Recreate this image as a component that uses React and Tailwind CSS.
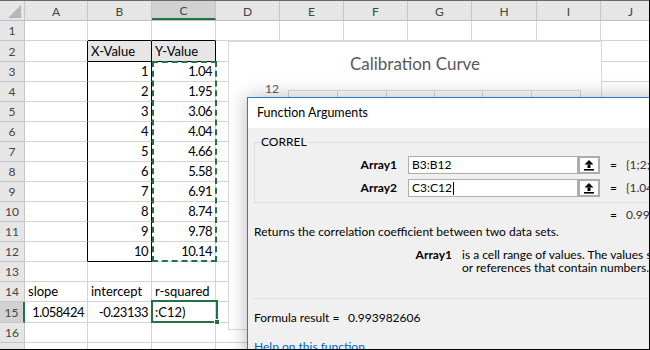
import React from 'react';

const COLS = [
  { l: 'A', w: 'w-[63px]' },
  { l: 'B', w: 'w-[64px]' },
  { l: 'C', w: 'w-[64px]' },
  { l: 'D', w: 'w-[64px]' },
  { l: 'E', w: 'w-[64px]' },
  { l: 'F', w: 'w-[64px]' },
  { l: 'G', w: 'w-[64px]' },
  { l: 'H', w: 'w-[65px]' },
  { l: 'I', w: 'w-[64px]' },
  { l: 'J', w: 'w-[60px]' },
];

const YVALS = ['1.04', '1.95', '3.06', '4.04', '4.66', '5.58', '6.91', '8.74', '9.78', '10.14'];

const DATA = {
  '2-1': 'X-Value',
  '2-2': 'Y-Value',
  '14-0': 'slope',
  '14-1': 'intercept',
  '14-2': 'r-squared',
  '15-0': '1.058424',
  '15-1': '-0.23133',
  '15-2': ':C12)',
};
for (let r = 3; r <= 12; r++) {
  DATA[`${r}-1`] = String(r - 2);
  DATA[`${r}-2`] = YVALS[r - 3];
}

const ROWS = Array.from({ length: 17 }, (_, i) => i + 1);

function Cell({ r, c, w }) {
  const text = DATA[`${r}-${c}`];
  const right = text && /^-?[\d.]+$/.test(text);
  const blackRight = (r >= 2 && r <= 12 && (c === 0 || c === 1)) || (r === 2 && c === 2);
  const blackBottom = ((r === 1 || r === 2) && (c === 1 || c === 2)) || (r === 12 && c === 1);
  const fill = r === 2 && (c === 1 || c === 2);
  return (
    <div
      className={[
        'shrink-0 h-full flex items-end pb-[3px] px-[3px] border-r border-b text-[13px] leading-[13px] text-black whitespace-nowrap',
        w,
        blackRight ? 'border-r-black' : 'border-r-[#d4d4d4]',
        blackBottom ? 'border-b-black' : 'border-b-[#d4d4d4]',
        fill ? 'bg-[#e7e6e6]' : 'bg-white',
        right ? 'justify-end tracking-[-0.5px]' : 'justify-start',
      ].join(' ')}
    >
      {text}
    </div>
  );
}

function UpArrow() {
  return (
    <svg width="10" height="11" viewBox="0 0 10 11">
      <polygon points="5,0 9.5,4.5 0.5,4.5" fill="#000" />
      <rect x="3.5" y="4.5" width="3" height="3.5" fill="#000" />
      <rect x="0" y="9" width="10" height="1.6" fill="#000" />
    </svg>
  );
}

function ArgRow({ label, value, result, cursor, mt }) {
  return (
    <div className={`flex items-center h-[18px] ${mt}`}>
      <div className="shrink-0 w-[142px] text-right font-bold">{label}</div>
      <div className="shrink-0 ml-[11px] w-[170px] h-[18px] border border-[#adadad] bg-white pl-[3px] flex items-center">
        {value}
        {cursor && <span className="ml-px w-px h-[13px] bg-black" />}
      </div>
      <div className="shrink-0 w-[22px] h-[18px] border-2 border-[#acacac] bg-white flex items-center justify-center">
        <UpArrow />
      </div>
      <span className="shrink-0 ml-[10px]">=</span>
      <span className="ml-[9px] whitespace-nowrap text-[#333]">{result}</span>
    </div>
  );
}

export default function App() {
  const gx = [59.5, 108.5, 157.5, 205.5, 253.5, 302.5, 351.5];
  return (
    <div className="relative w-[650px] h-[350px] overflow-hidden bg-white border-r border-b border-black font-['Lato',sans-serif]">
      {/* column headers */}
      <div className="flex h-[21px] border-t border-t-[#6b6b6b] border-b border-b-[#bfbfbf] bg-[#e6e6e6]">
        <div className="shrink-0 w-[25px] h-full border-r border-[#c6c6c6]">
          <svg width="24" height="19">
            <polygon points="21,4 21,17 8,17" fill="#b6b6b6" />
          </svg>
        </div>
        {COLS.map((col, i) => (
          <div
            key={col.l}
            className={`shrink-0 ${col.w} h-full flex items-center justify-center pt-[2px] text-[12px] text-[#444] border-r border-[#c6c6c6] ${
              i === 2 ? 'bg-[#d2d2d2] border-b-2 border-b-[#217346]' : ''
            }`}
          >
            {col.l}
          </div>
        ))}
      </div>

      {/* rows */}
      {ROWS.map((r) => (
        <div key={r} className={`flex ${r === 2 || r === 15 ? 'h-[21px]' : 'h-[20px]'}`}>
          <div
            className={`shrink-0 w-[25px] h-full flex items-end justify-center pb-[3px] text-[12px] leading-[13px] text-[#444] border-b border-b-[#c6c6c6] ${
              r === 15
                ? 'bg-[#d2d2d2] border-r-2 border-r-[#217346]'
                : 'bg-[#e6e6e6] border-r border-r-[#c6c6c6]'
            }`}
          >
            {r}
          </div>
          {COLS.map((col, c) => (
            <Cell key={col.l} r={r} c={c} w={col.w} />
          ))}
        </div>
      ))}

      {/* copy marquee around C3:C12 */}
      <div className="absolute left-[152px] top-[61px] w-[65px] h-[201px] border-2 border-dashed border-[#217346]" />

      {/* active cell C15 */}
      <div className="absolute left-[151px] top-[300px] w-[67px] h-[23px] border-2 border-[#217346]" />
      <div className="absolute left-[214px] top-[319px] w-[6px] h-[6px] bg-[#217346] border border-white" />

      {/* chart */}
      <div className="absolute left-[228px] top-[41px] w-[374px] h-[289px] bg-white border border-[#d9d9d9]">
        <div className="pt-[12px] text-center text-[17px] leading-[20px] text-[#595959]">Calibration Curve</div>
        <div className="absolute left-[20px] top-[40px] w-[30px] text-right text-[12px] leading-[14px] text-[#595959]">12</div>
        <svg className="absolute left-0 top-0" width="372" height="287">
          <line x1="59" y1="48.5" x2="352" y2="48.5" stroke="#d9d9d9" strokeWidth="1" />
          {gx.map((x) => (
            <line key={x} x1={x} y1="48" x2={x} y2="287" stroke="#d9d9d9" strokeWidth="1" />
          ))}
        </svg>
      </div>

      {/* Function Arguments dialog */}
      <div className="absolute left-[247px] top-[97px] w-[420px] h-[270px] bg-[#f0f0f0] border-l border-t border-[#2b7bd1] shadow-[0_0_18px_rgba(0,0,0,0.28)] text-[12px] leading-[14px] text-black">
        <div className="h-[30px] bg-white flex items-center pl-[9px] text-[12.5px]">Function Arguments</div>

        <fieldset className="ml-[6px] mt-[7px] h-[68px] border border-[#dcdcdc]">
          <legend className="ml-[5px] px-px leading-[14px]">CORREL</legend>
          <ArgRow label="Array1" value="B3:B12" result="{1;2;3;4;5;6;7;8;9;10}" mt="mt-[7px]" />
          <ArgRow
            label="Array2"
            value="C3:C12"
            result="{1.04;1.95;3.06;4.04;4.66;5.58;6.91;8.74;9.78;10.14}"
            cursor
            mt="mt-[5px]"
          />
        </fieldset>

        <div className="mt-[5px] pl-[362px] flex whitespace-nowrap">
          <span>=</span>
          <span className="ml-[9px] text-[#333]">0.993982606</span>
        </div>

        <div className="mt-[3px] pl-[6px] whitespace-nowrap">Returns the correlation coefficient between two data sets.</div>

        <div className="mt-[9px] flex whitespace-nowrap">
          <div className="shrink-0 w-[204px] text-right font-bold">Array1</div>
          <div className="shrink-0 ml-[10px] leading-[13px]">
            <div>is a cell range of values. The values should be numbers, names, arrays,</div>
            <div>or references that contain numbers.</div>
          </div>
        </div>

        <div className="mt-[24px] ml-[6px] border-t border-[#dcdcdc]" />

        <div className="mt-[12px] pl-[6px] flex whitespace-nowrap">
          <span className="shrink-0 w-[94px]">Formula result =</span>
          <span>0.993982606</span>
        </div>

        <div className="mt-[15px] pl-[6px] text-[#0066cc] underline whitespace-nowrap">Help on this function</div>
      </div>
    </div>
  );
}
